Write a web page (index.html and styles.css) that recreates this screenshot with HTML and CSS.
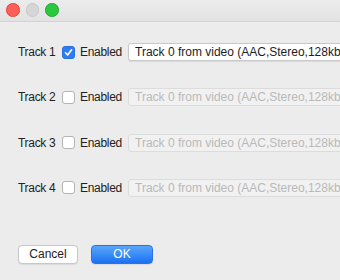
FILE: index.html
```html
<!DOCTYPE html>
<html lang="en">
<head>
    <meta charset="UTF-8">
    <title>Audio Tracks</title>
    <link rel="stylesheet" href="styles.css">
</head>
<body>
    <div class="window">
        <div class="title-bar">
            <span class="light close"></span>
            <span class="light minimize"></span>
            <span class="light zoom"></span>
        </div>

        <div class="tracks">
            <div class="track-row">
                <span class="track-label">Track 1</span>
                <label class="check">
                    <span class="box checked">
                        <svg width="9" height="9" viewBox="0 0 9 9"><path d="M1.5 4.8 L3.6 7 L7.6 1.8" fill="none" stroke="#fff" stroke-width="1.6" stroke-linecap="round" stroke-linejoin="round"/></svg>
                    </span>
                    Enabled
                </label>
                <div class="track-select">Track 0 from video (AAC,Stereo,128kbps)</div>
            </div>
            <div class="track-row">
                <span class="track-label">Track 2</span>
                <label class="check"><span class="box"></span>Enabled</label>
                <div class="track-select disabled">Track 0 from video (AAC,Stereo,128kbps)</div>
            </div>
            <div class="track-row">
                <span class="track-label">Track 3</span>
                <label class="check"><span class="box"></span>Enabled</label>
                <div class="track-select disabled">Track 0 from video (AAC,Stereo,128kbps)</div>
            </div>
            <div class="track-row">
                <span class="track-label">Track 4</span>
                <label class="check"><span class="box"></span>Enabled</label>
                <div class="track-select disabled">Track 0 from video (AAC,Stereo,128kbps)</div>
            </div>
        </div>

        <div class="buttons">
            <button class="btn">Cancel</button>
            <button class="btn primary">OK</button>
        </div>
    </div>
</body>
</html>
```

FILE: styles.css
```css
body {
    margin: 0;
    font-family: "Liberation Sans", Arial, sans-serif;
    font-size: 12px;
    color: #222;
    background: #ececec;
}

.window {
    width: 340px;
    height: 280px;
    overflow: hidden;
    background: #ececec;
}

.title-bar {
    height: 21px;
    display: flex;
    align-items: center;
    gap: 6px;
    padding-left: 6px;
    background: linear-gradient(#ececec, #e2e2e2);
    border-bottom: 1px solid #d2d2d2;
}

.light {
    width: 11.5px;
    height: 11.5px;
    border-radius: 50%;
    margin-top: -1px;
}

.light.close {
    background: #fc5f57;
    border: 0.5px solid #e2463f;
}

.light.minimize {
    background: #d6d6d6;
    border: 0.5px solid #c6c6c6;
}

.light.zoom {
    background: #2ac83f;
    border: 0.5px solid #1eab2f;
}

.tracks {
    display: flex;
    flex-direction: column;
    gap: 27.3px;
    padding: 21px 0 0 18px;
}

.track-row {
    display: flex;
    align-items: center;
    height: 18px;
    white-space: nowrap;
}

.track-row > * {
    flex-shrink: 0;
}

.track-label {
    width: 44px;
    letter-spacing: -0.3px;
}

.check {
    display: flex;
    align-items: center;
    width: 66px;
    letter-spacing: -0.3px;
}

.box {
    width: 11px;
    height: 11px;
    margin-right: 5px;
    border: 0.5px solid #b4b4b4;
    border-radius: 3px;
    background: #fff;
    display: flex;
    align-items: center;
    justify-content: center;
}

.box.checked {
    background: #2e7df6;
    border-color: #2a6fdc;
}

.track-select {
    height: 16px;
    line-height: 16px;
    padding-left: 6px;
    width: 260px;
    font-size: 12px;
    border: 1px solid #c9c9c9;
    border-radius: 3px;
    background: #fff;
    color: #1d1d1d;
    box-shadow: 0 0.5px 1px rgba(0, 0, 0, 0.08);
}

.track-select.disabled {
    background: #f1f1f1;
    border-color: #dcdcdc;
    color: #b9b9b9;
    box-shadow: none;
}

.buttons {
    display: flex;
    gap: 13px;
    padding: 48px 0 0 18px;
}

.btn {
    height: 19px;
    width: 60px;
    padding: 0;
    font-family: "Liberation Sans", Arial, sans-serif;
    font-size: 12px;
    color: #222;
    background: #fff;
    border: 1px solid #c8c8c8;
    border-radius: 4px;
    box-shadow: 0 0.5px 1px rgba(0, 0, 0, 0.08);
}

.btn.primary {
    width: 62px;
    color: #fff;
    background: linear-gradient(#5aa6fb, #1b72f2);
    border-color: #2a74e6;
}
```
